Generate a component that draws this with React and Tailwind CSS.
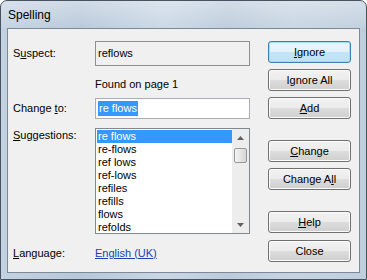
import React from "react";

const font = { fontFamily: '"Liberation Sans", Arial, sans-serif' };

function U({ children }) {
  return <span className="underline underline-offset-[1px]">{children}</span>;
}

function Btn({ children, def, className = "" }) {
  return (
    <div
      className={
        "h-[22px] w-[83px] rounded-[3px] border flex items-center justify-center text-[11px] text-black " +
        (def
          ? "border-[#3c7fb1] bg-[linear-gradient(#eaf6fd_0%,#e2f1fb_50%,#c6e4f7_51%,#bde0f6_100%)] shadow-[inset_0_0_0_1px_#9fdcf8] "
          : "border-[#707070] bg-[linear-gradient(#f2f2f2_0%,#ebebeb_50%,#dddddd_51%,#cfcfcf_100%)] shadow-[inset_0_0_0_1px_#fcfcfc] ") +
        className
      }
    >
      {children}
    </div>
  );
}

const items = ["re flows", "re-flows", "ref lows", "ref-lows", "refiles", "refills", "flows", "refolds"];

export default function App() {
  return (
    <div
      style={font}
      className="w-[367px] h-[280px] overflow-hidden rounded-t-[7px] border border-[#48535f] bg-[linear-gradient(90deg,#c3d2e1_0%,#b7c8d9_22%,#c9d7e5_45%,#bccbdb_62%,#c6d4e2_80%,#bfcedd_100%)] flex flex-col"
    >
      <div className="h-[27px] flex items-center pl-[7px] text-[12px] text-black bg-[linear-gradient(rgba(255,255,255,0.35),rgba(255,255,255,0.05))]">
        Spelling
      </div>
      <div className="mx-[6px] border border-[#7d8997] bg-[#f0f0f0] h-[245px] flex flex-row text-[11px] text-black">
        {/* left column */}
        <div className="pl-[5px] pt-[12px] flex flex-col w-[242px]">
          <div className="flex items-center h-[25px]">
            <div className="w-[82px]">
              S<U>u</U>spect:
            </div>
            <div className="w-[155px] h-[25px] border border-[#8e8f8f] bg-[#f0f0f0] flex items-center pl-[2px]">
              reflows
            </div>
          </div>
          <div className="mt-[12px] h-[13px] leading-[13px] pl-[82px]">Found on page 1</div>
          <div className="mt-[7px] flex items-center h-[21px]">
            <div className="w-[82px]">
              Change <U>t</U>o:
            </div>
            <div className="w-[155px] h-[21px] border border-[#abadb3] bg-white flex items-center pl-[2px]">
              <span className="bg-[#3399ff] text-white leading-[15px] px-[1px]">re flows</span>
            </div>
          </div>
          <div className="mt-[9px] flex items-start h-[106px]">
            <div className="w-[82px] pt-[1px] leading-[13px]">
              <U>S</U>uggestions:
            </div>
            <div className="w-[155px] h-[106px] border border-[#828790] bg-white flex flex-row">
              <div className="flex-1 pt-[1px] pl-[1px]">
                {items.map((it, i) => (
                  <div
                    key={it}
                    className={
                      "h-[13px] leading-[13px] pl-[1px] text-[11px] " +
                      (i === 0 ? "bg-[#3399ff] text-white" : "text-black")
                    }
                  >
                    {it}
                  </div>
                ))}
              </div>
              <div className="w-[17px] h-full bg-[#ededed] flex flex-col items-center">
                <div className="h-[17px] w-full flex items-center justify-center">
                  <svg width="7" height="4" viewBox="0 0 7 4">
                    <path d="M3.5 0 L7 4 L0 4 Z" fill="#606060" />
                  </svg>
                </div>
                <div className="mt-[2px] w-[13px] h-[15px] rounded-[2px] border border-[#979797] bg-[linear-gradient(90deg,#f4f4f4,#e2e2e2_60%,#d6d6d6)]" />
                <div className="flex-1" />
                <div className="h-[17px] w-full flex items-center justify-center">
                  <svg width="7" height="4" viewBox="0 0 7 4">
                    <path d="M0 0 L7 0 L3.5 4 Z" fill="#606060" />
                  </svg>
                </div>
              </div>
            </div>
          </div>
          <div className="mt-[13px] flex items-center h-[13px] leading-[13px]">
            <div className="w-[82px]">
              <U>L</U>anguage:
            </div>
            <div className="text-[#2140b5] underline underline-offset-[1px]">English (UK)</div>
          </div>
        </div>
        {/* right column */}
        <div className="ml-[18px] pt-[12px] flex flex-col">
          <Btn def>
            <U>I</U>gnore
          </Btn>
          <Btn className="mt-[6px]">
            I<U>g</U>nore All
          </Btn>
          <Btn className="mt-[6px]">
            <U>A</U>dd
          </Btn>
          <Btn className="mt-[21px]">
            <U>C</U>hange
          </Btn>
          <Btn className="mt-[6px]">
            Change A<U>l</U>l
          </Btn>
          <Btn className="mt-[21px]">
            <U>H</U>elp
          </Btn>
          <Btn className="mt-[7px]">Close</Btn>
        </div>
      </div>
    </div>
  );
}
